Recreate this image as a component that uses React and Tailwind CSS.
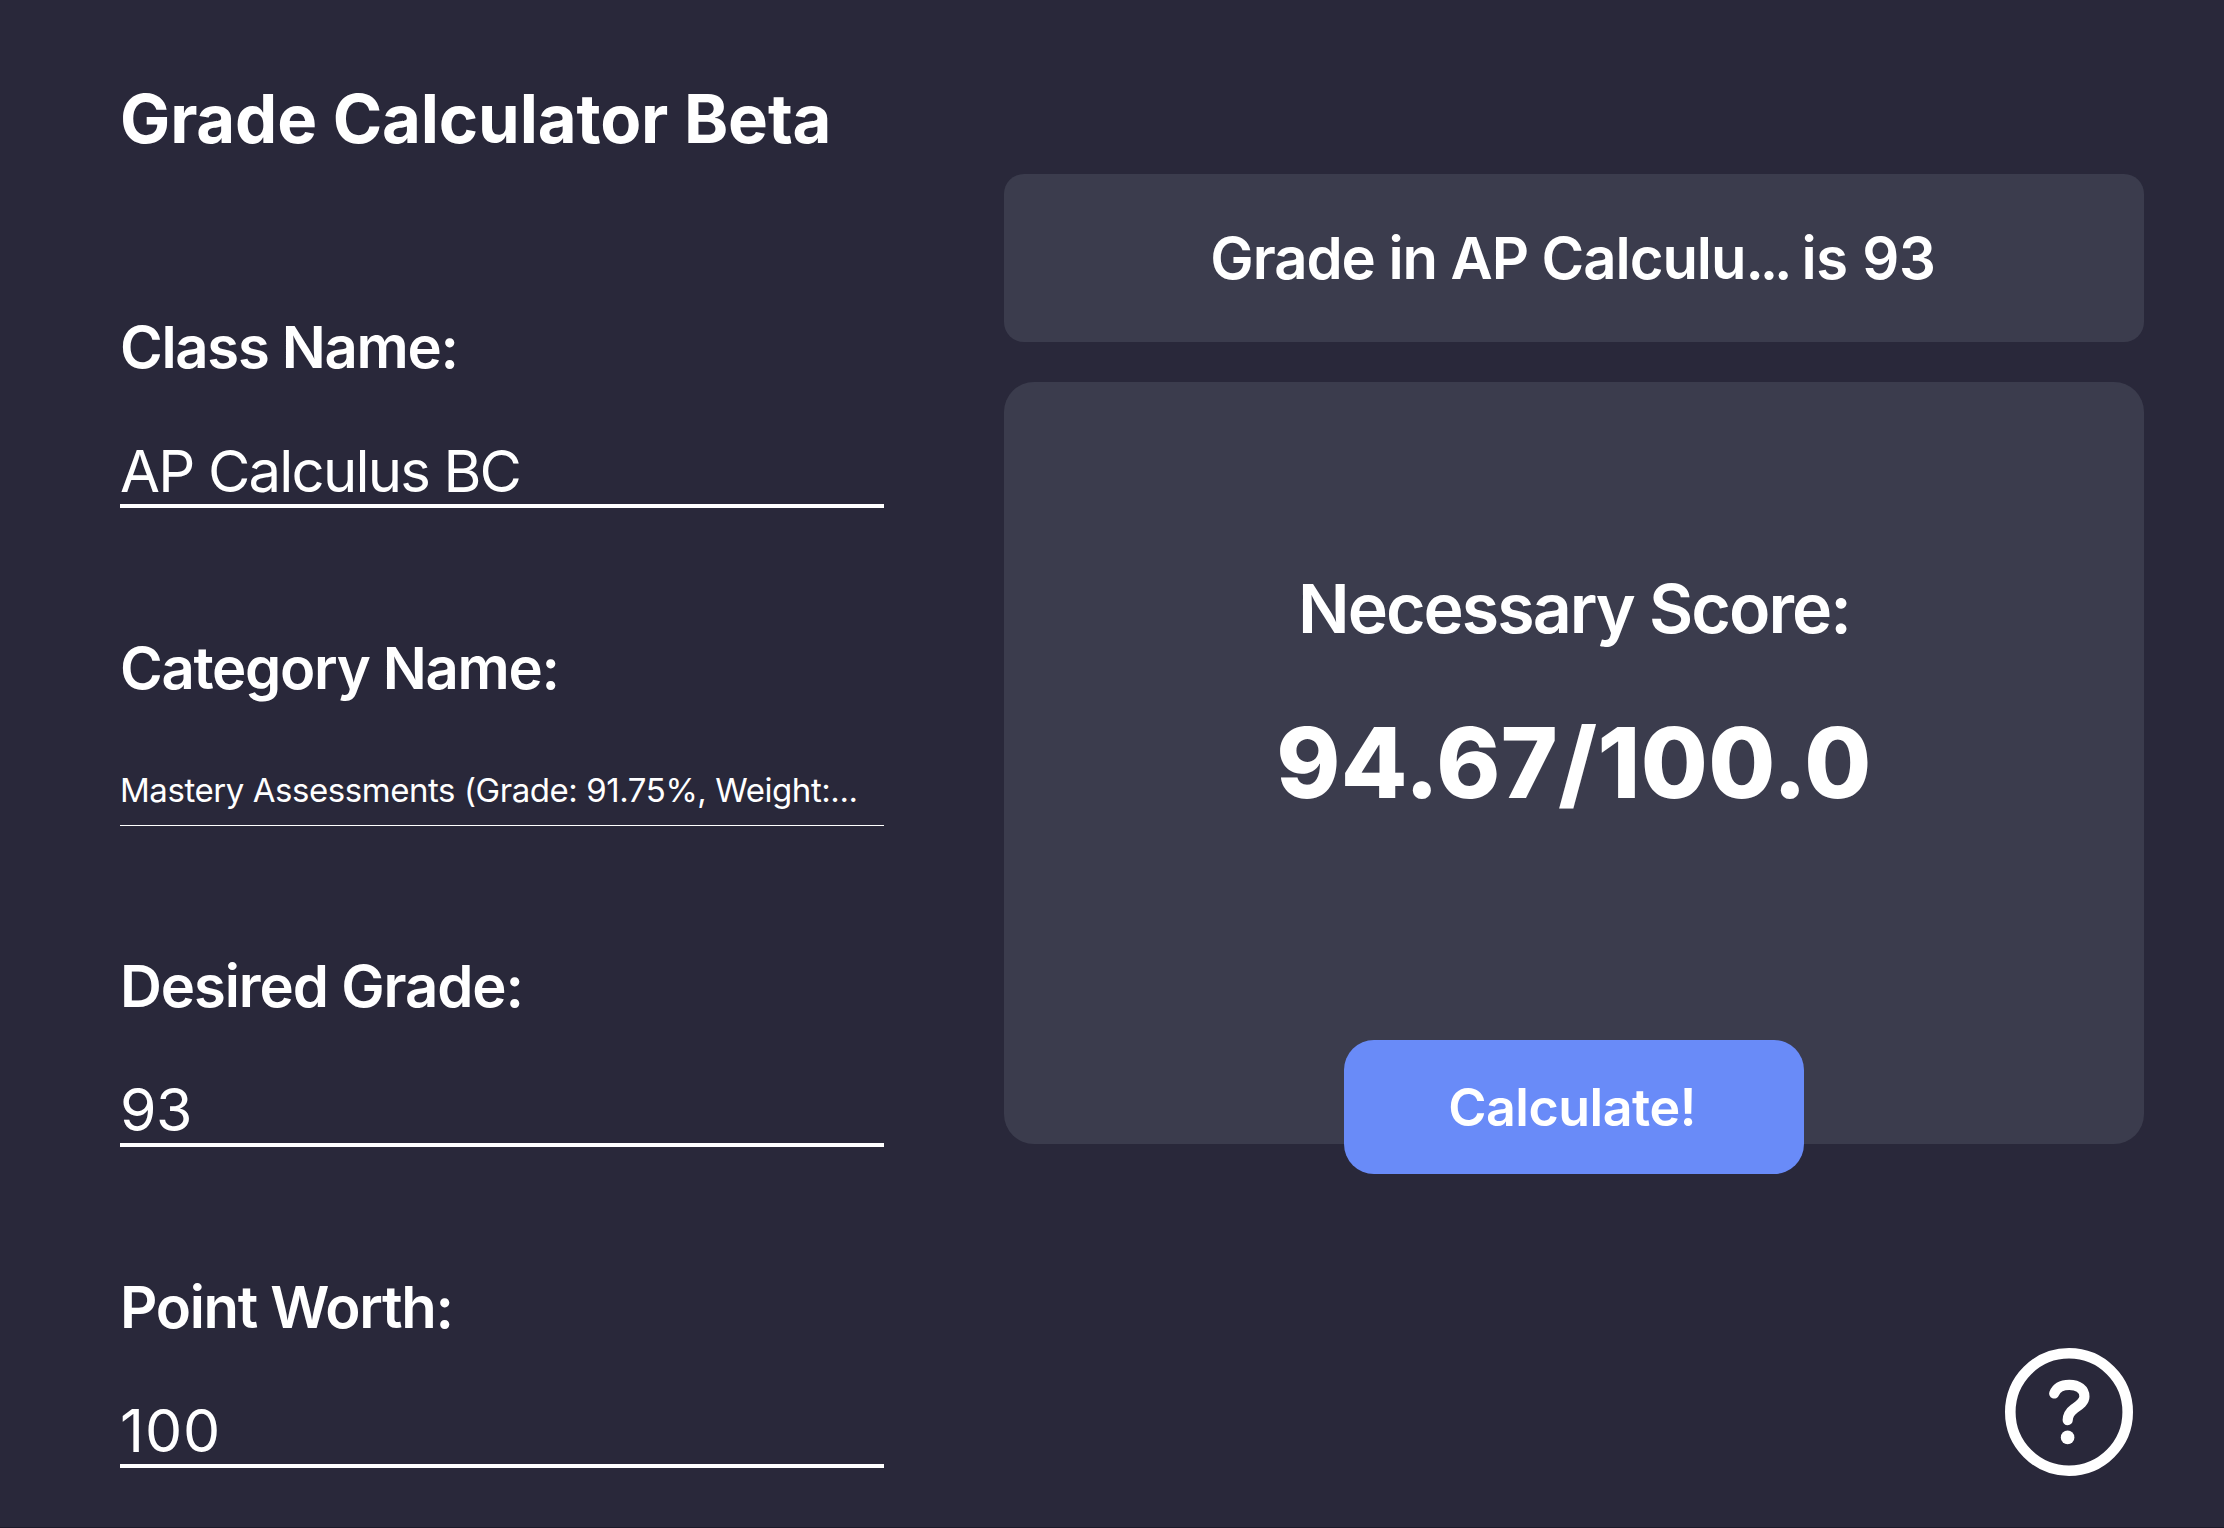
const label = 'h-[70px] text-[58px] leading-[70px] font-semibold whitespace-nowrap';
const input =
  'mt-[54px] block h-[72px] w-full border-b-4 border-white bg-transparent p-0 text-[58px] leading-[70px] font-normal whitespace-nowrap';

function HelpIcon() {
  return (
    <svg viewBox="0 0 128 128" className="h-32 w-32" fill="none" stroke="white" aria-label="Help">
      <circle cx="64" cy="64" r="58.7" strokeWidth="10.6" />
      <path
        d="M49.200 45.500C51.500 39.500 57 36.800 64.300 36.800C73.500 36.800 79.400 41.500 79.400 48.500C79.400 54 74 57.300 69.300 60.600C65 63.800 62.800 67 62.700 72.200"
        strokeWidth="10.2"
        strokeLinecap="round"
        strokeLinejoin="round"
      />
      <circle cx="62.600" cy="89.400" r="6.800" fill="white" stroke="none" />
    </svg>
  );
}

export default function App() {
  return (
    <main className="flex h-[1528px] w-[2224px] overflow-hidden border-b border-[#1b1a29] bg-[#29283a] pl-[120px] font-['Inter',sans-serif] text-white">
      <section className="w-[764px] pt-[79px]">
        <h1 className="h-20 text-[67px] leading-[80px] font-bold tracking-[-0.15px] whitespace-nowrap">Grade Calculator Beta</h1>
        <div className="mt-[153px] flex flex-col gap-[125px]">
          <div>
            <div className={label}><span className="tracking-[-1.3px]">Class Name:</span></div>
            <div className={input}><span className="tracking-[-1.8px]">AP Calculus BC</span></div>
          </div>
          <div>
            <div className={label}><span className="tracking-[-1.3px]">Category Name:</span></div>
            <div className="mt-[66px] h-[57px] border-b border-white text-[33px] leading-[42px] whitespace-nowrap">
              <span className="tracking-[-0.44px]">Mastery Assessments (Grade: 91.75%, Weight:...</span>
            </div>
          </div>
          <div>
            <div className={label}><span className="tracking-[-1.1px]">Desired Grade:</span></div>
            <div className={input}><span className="text-[59px] tracking-[-0.5px]">93</span></div>
          </div>
          <div>
            <div className={label}><span className="tracking-[-1.3px]">Point Worth:</span></div>
            <div className={input}><span className="text-[59px] tracking-[0.9px]">100</span></div>
          </div>
        </div>
      </section>

      <section className="ml-[120px] flex w-[1140px] flex-col pt-[174px]">
        <div className="flex h-[168px] items-center justify-center rounded-[20px] bg-[#3b3c4d] pr-0.5 text-[58px] font-semibold whitespace-nowrap">
          <span className="tracking-[-1.05px]">
            Grade in AP Calculu<span className="tracking-[-4.2px]">...</span>
            <span className="tracking-[-1.5px]"> </span>
            <span className="tracking-[-0.3px]">is 93</span>
          </span>
        </div>
        <div className="mt-10 flex h-[762px] flex-col items-center rounded-[30px] bg-[#3b3c4d] pt-[186px]">
          <h2 className="h-20 text-[68px] leading-[80px] font-semibold tracking-[-1.95px] whitespace-nowrap">Necessary Score:</h2>
          <p className="mt-[55px] h-[120px] text-[97px] leading-[120px] font-extrabold tracking-[0.4px] whitespace-nowrap">94.67/100.0</p>
          <button className="mt-[217px] h-[134px] w-[460px] shrink-0 rounded-[30px] bg-[#698bf8] pt-0.5 pr-1 text-[52px] font-semibold tracking-[-0.5px]">
            Calculate!
          </button>
        </div>
        <div className="mt-[204px] mr-[11px] self-end">
          <HelpIcon />
        </div>
      </section>
    </main>
  );
}
